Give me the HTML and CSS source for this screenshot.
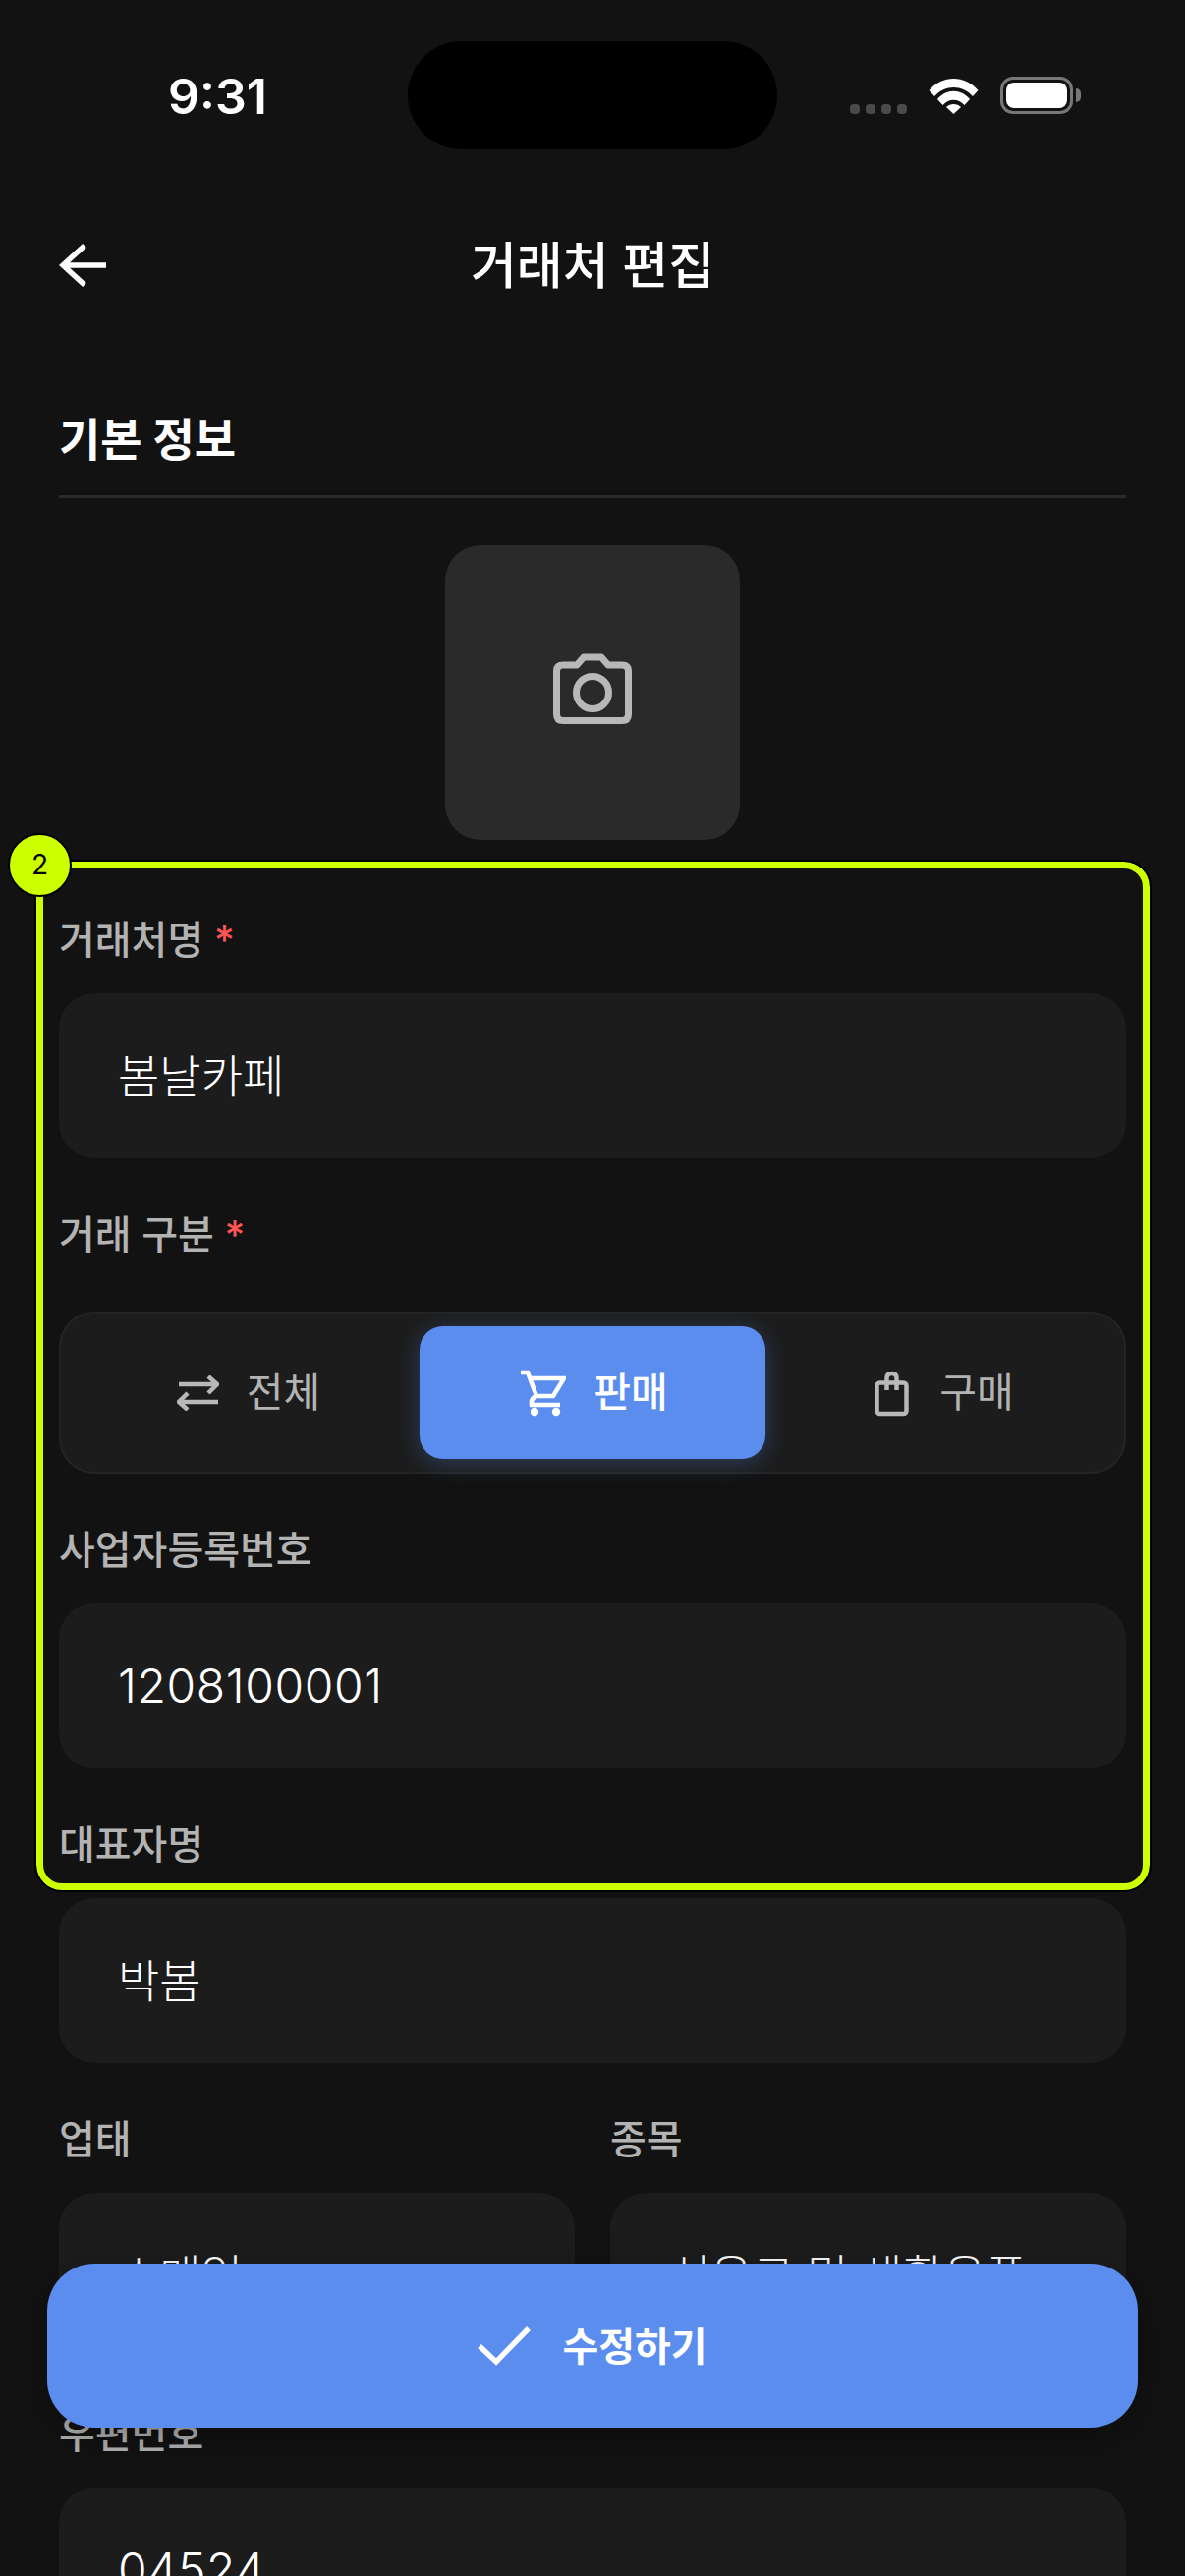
FILE: index.html
```html
<!DOCTYPE html>
<html lang="ko">
<head>
    <meta charset="UTF-8">
    <meta name="viewport" content="width=device-width, initial-scale=1.0">
    <title>거래처 편집</title>
    <link rel="stylesheet" href="styles.css">
</head>
<body>

    <div class="screen">
        <div class="status-bar">
            <span class="status-time">9:31</span>
            <div class="island"></div>
            <div class="status-icons">
                <div class="signal"><i></i><i></i><i></i><i></i></div>
                <svg class="wifi" viewBox="0 0 51 37">
                    <path d="M0.5 13 C14 -3 37 -3 50.5 13 L45 19 C34 7 17 7 6 19 Z" fill="#fff"/>
                    <path d="M9 22 C18 11 33 11 42 22 L36.5 28 C30 21 21 21 14.5 28 Z" fill="#fff"/>
                    <path d="M18 30 C22 26 29 26 33 30 L25.5 37 Z" fill="#fff"/>
                </svg>
                <div class="battery"><div class="battery-fill"></div></div>
            </div>
        </div>

        <div class="top-bar">
            <svg class="back-icon" viewBox="0 0 48 46" fill="none" stroke="#fff" stroke-width="5.500">
                <path d="M4 23 H48"/>
                <path d="M26 3 L4 23 L26 43"/>
            </svg>
            <h1>거래처 편집</h1>
        </div>

        <div class="content">
            <h2>기본 정보</h2>

            <div class="photo-box">
                <svg viewBox="0 0 80 72" width="80" height="72" fill="none" stroke="#b8b8b8" stroke-width="7" stroke-linejoin="round">
                    <path d="M10 12 H24 L31 4 H49 L56 12 H70 Q76.5 12 76.5 18 V62 Q76.5 68.500 70 68.500 H10 Q3.500 68.500 3.500 62 V18 Q3.500 12 10 12 Z"/>
                    <circle cx="40" cy="40" r="16.500"/>
                </svg>
            </div>

            <div class="field">
                <label>거래처명 <span class="req">*</span></label>
                <div class="input">봄날카페</div>
            </div>

            <div class="field">
                <label>거래 구분 <span class="req">*</span></label>
                <div class="segment">
                    <div class="seg-item">
                        <svg viewBox="0 0 43 36" width="43" height="36" fill="none" stroke="#b8b8b8" stroke-width="4.500">
                            <path d="M2 9 H41"/>
                            <path d="M32 1 L41 9 L32 18"/>
                            <path d="M42 27 H2"/>
                            <path d="M11 18 L2 27 L11 35"/>
                        </svg>
                        <span>전체</span>
                    </div>
                    <div class="seg-item active">
                        <svg viewBox="0 0 46 48" width="46" height="48" fill="none" stroke="#fff" stroke-width="4.500">
                            <path d="M0 3 H7 L16 27"/>
                            <path d="M10 9 H44 L33 27 H16 Q10 29 11 36 H40"/>
                            <circle cx="14" cy="43" r="4.200" fill="#fff" stroke="none"/>
                            <circle cx="36" cy="43" r="4.200" fill="#fff" stroke="none"/>
                        </svg>
                        <span>판매</span>
                    </div>
                    <div class="seg-item">
                        <svg class="bag-icon" viewBox="0 0 40 48" width="40" height="48" fill="none" stroke="#b8b8b8" stroke-width="4.500">
                            <rect x="4.500" y="13.500" width="30" height="31.500" rx="3"/>
                            <path d="M14.500 21 V9 Q14.500 4 19.500 4 Q24.500 4 24.500 9 V21"/>
                        </svg>
                        <span>구매</span>
                    </div>
                </div>
            </div>

            <div class="field">
                <label>사업자등록번호</label>
                <div class="input num">1208100001</div>
            </div>

            <div class="field">
                <label>대표자명</label>
                <div class="input">박봄</div>
            </div>

            <div class="field-row">
                <div class="field">
                    <label>업태</label>
                    <div class="input">소매업</div>
                </div>
                <div class="field">
                    <label>종목</label>
                    <div class="input">식음료 및 생활용품</div>
                </div>
            </div>

            <div class="field">
                <label>우편번호</label>
                <div class="input num">04524</div>
            </div>
        </div>

        <!-- annotation frame -->
        <div class="mark-frame"></div>
        <div class="mark-badge">2</div>

        <div class="save-btn">
            <svg viewBox="0 0 54 41" width="54" height="41" fill="none" stroke="#fff" stroke-width="5.500">
                <path d="M2 21 L19 37 L52 3"/>
            </svg>
            <span>수정하기</span>
        </div>
    </div>

</body>
</html>
```

FILE: styles.css
```css
body {
    margin: 0;
    background-color: #121212;
    color: #fff;
    font-family: Inter, "Noto Sans CJK KR", sans-serif;
}

.screen {
    position: relative;
    width: 1206px;
    height: 2622px;
    overflow: hidden;
    background-color: #121212;
}

/* status bar */
.status-bar {
    position: relative;
    height: 194px;
    box-sizing: border-box;
    padding-top: 42px;
    display: flex;
    justify-content: center;
}

.status-time {
    position: absolute;
    left: 171px;
    top: 67px;
    font-size: 50px;
    line-height: 62px;
    font-weight: 600;
}

.island {
    width: 376px;
    height: 110px;
    border-radius: 55px;
    background-color: #000;
}

.status-icons {
    position: absolute;
    left: 865px;
    top: 78px;
    width: 235px;
    height: 38px;
    display: flex;
    align-items: flex-end;
}

.signal {
    display: flex;
    gap: 6px;
    margin-right: 22px;
}

.signal i {
    width: 10px;
    height: 10px;
    border-radius: 4px;
    background-color: #4a4a4a;
}

.wifi {
    width: 51px;
    height: 37px;
    margin-right: 22px;
}

.battery {
    position: relative;
    width: 74px;
    height: 38px;
    box-sizing: border-box;
    border: 3px solid #777;
    border-radius: 13px;
    padding: 3px;
}

.battery::after {
    content: "";
    position: absolute;
    right: -11px;
    top: 9px;
    width: 5px;
    height: 14px;
    border-radius: 0 6px 6px 0;
    background-color: #777;
}

.battery-fill {
    height: 100%;
    border-radius: 8px;
    background-color: #fff;
}

/* header */
.top-bar {
    height: 213px;
    box-sizing: border-box;
    padding: 0 60px;
    position: relative;
    display: flex;
    justify-content: center;
    align-items: flex-start;
}

.back-icon {
    position: absolute;
    left: 60px;
    top: 53px;
    width: 48px;
    height: 46px;
}

h1 {
    margin: 47px 0 0;
    font-size: 51px;
    line-height: 60px;
    font-weight: 500;
}

.content {
    padding: 0 60px;
}

h2 {
    margin: 0;
    height: 100px;
    box-sizing: border-box;
    padding-top: 9px;
    border-bottom: 3px solid #2a2a2a;
    font-size: 46px;
    line-height: 62px;
    font-weight: 700;
}

.photo-box {
    width: 300px;
    height: 300px;
    margin: 48px auto 82px;
    box-sizing: border-box;
    padding-bottom: 8px;
    border-radius: 36px;
    background-color: #2a2a2a;
    display: flex;
    align-items: center;
    justify-content: center;
}

.field {
    margin-bottom: 58px;
}

label {
    display: block;
    height: 40px;
    margin-bottom: 34px;
    font-size: 40px;
    line-height: 40px;
    font-weight: 500;
    color: #b3b3b3;
}

.req {
    color: #ff5555;
}

.input {
    height: 168px;
    box-sizing: border-box;
    padding: 0 60px;
    border-radius: 36px;
    background-color: #1c1c1c;
    font-size: 46px;
    font-weight: 300;
    line-height: 168px;
    white-space: nowrap;
    overflow: hidden;
}

.input.num {
    font-size: 48px;
    letter-spacing: 0.6px;
}

.segment {
    display: flex;
    height: 165px;
    margin-top: 58px;
    box-sizing: border-box;
    padding: 13px;
    border: 2px solid #242424;
    border-radius: 36px;
    background-color: #1c1c1c;
}

.seg-item {
    flex: 1;
    display: flex;
    align-items: center;
    justify-content: center;
    gap: 28px;
    padding-left: 4px;
    border-radius: 24px;
    font-size: 41px;
    color: #b3b3b3;
}

.seg-item span {
    margin-bottom: 8px;
}

.seg-item.active {
    background-color: #5b8def;
    box-shadow: 0 4px 24px rgba(91, 141, 239, 0.3);
    color: #fff;
    font-weight: 500;
}

.bag-icon {
    margin-left: 6px;
}

.field-row {
    display: grid;
    grid-template-columns: 1fr 1fr;
    gap: 36px;
}

/* yellow annotation over the form */
.mark-frame {
    position: absolute;
    left: 37px;
    top: 877px;
    width: 1133px;
    height: 1047px;
    box-sizing: border-box;
    border: 7px solid #ccff00;
    border-radius: 26px;
    outline: 2px solid #000;
}

.mark-badge {
    position: absolute;
    left: 8px;
    top: 848px;
    width: 65px;
    height: 65px;
    box-sizing: border-box;
    border: 2px solid #000;
    border-radius: 50%;
    background-color: #ccff00;
    color: #000;
    font-size: 28px;
    line-height: 61px;
    text-align: center;
}

.save-btn {
    position: absolute;
    left: 48px;
    top: 2304px;
    width: 1110px;
    height: 167px;
    border-radius: 48px;
    background-color: #5b8def;
    box-shadow: 0 10px 40px rgba(0, 0, 0, 0.3);
    display: flex;
    align-items: center;
    justify-content: center;
    gap: 32px;
    font-size: 40px;
    font-weight: 700;
}

.save-btn span {
    margin-bottom: 3px;
}
```
